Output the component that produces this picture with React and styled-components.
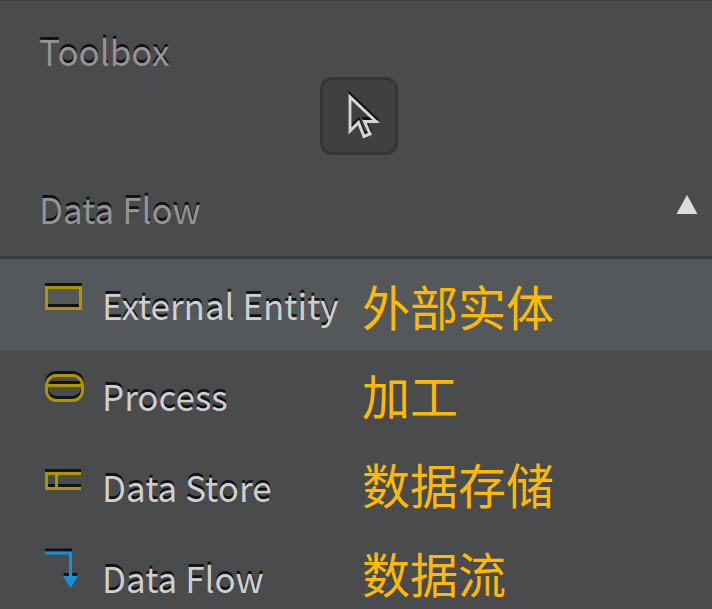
import React from 'react';
import styled, { createGlobalStyle } from 'styled-components';

const items = [
  { name: 'External Entity', icon: 'entity', active: true },
  { name: 'Process', icon: 'process' },
  { name: 'Data Store', icon: 'store' },
  { name: 'Data Flow', icon: 'flow' },
];

const notes = ['外部实体', '加工', '数据存储', '数据流'];

const shapes = {
  entity: <path d="M1.500 3.500h34v21h-34z" />,
  process: (
    <>
      <rect x="1.500" y="0.500" width="36" height="25" rx="10" />
      <path d="M2 10.500h35" />
    </>
  ),
  store: <path d="M36 7.500h-34.500v15h34.500M11.500 7.500v15" />,
  flow: (
    <>
      <path d="M0 -4h25.500v24" />
      <path d="M18 19h15l-7.500 12z" fill="currentColor" stroke="none" />
    </>
  ),
};

const ItemIcon = ({ type }) => (
  <StyledIcon viewBox="0 0 40 40" $blue={type === 'flow'} aria-hidden="true">
    <g color="#111213" stroke="currentColor" transform="translate(0 -3)">{shapes[type]}</g>
    <g stroke="currentColor">{shapes[type]}</g>
  </StyledIcon>
);

const App = () => {
  return (
    <Panel>
      <GlobalStyle />
      <Title>Toolbox</Title>
      <Tools>
        <ToolButton type="button" aria-label="Select" aria-pressed="true">
          <svg width="36" height="50" viewBox="0 0 36 50" fill="none" strokeWidth="3" overflow="visible" aria-hidden="true">
            <path d="M9 3v34l8.500-8.500 5.500 14 6-2.500-5.500-12.500h11.500z" stroke="#111213" />
            <path d="M9 6v34l8.500-8.500 5.500 14 6-2.500-5.500-12.500h11.500z" stroke="#d4d6d6" />
          </svg>
        </ToolButton>
      </Tools>
      <SectionButton type="button" aria-expanded="true">
        <span>Data Flow</span>
        <Arrow viewBox="0 0 22 19" aria-hidden="true">
          <path d="M11 0l10.500 19h-21z" fill="#dcdcdc" />
        </Arrow>
      </SectionButton>
      <Section>
        <List>
          {items.map((item) => (
            <li key={item.icon}>
              <Item type="button" $active={item.active}>
                <ItemIcon type={item.icon} />
                <Label>{item.name}</Label>
              </Item>
            </li>
          ))}
        </List>
        <Notes lang="zh-CN">
          {notes.map((note) => (
            <Note key={note}>{note}</Note>
          ))}
        </Notes>
      </Section>
    </Panel>
  );
}

const GlobalStyle = createGlobalStyle`
  * {
    box-sizing: border-box;
  }

  body {
    margin: 0;
    overflow: hidden;
    background: #4a4b4c;
  }

  button {
    border: none;
    background: none;
    color: inherit;
    font: inherit;
    cursor: pointer;
  }
`;

const Panel = styled.main`
  min-height: 100vh;
  border-top: 1px solid #414243;
  background: #4a4b4c;
  color: #cfcfcf;
  font-family: "Noto Sans CJK SC", "Noto Sans", sans-serif;
  font-size: 35px;
  line-height: 48px;
  text-shadow: 0 -3px 0 #111213;
`;

const Title = styled.h1`
  margin: 0;
  padding: 26px 39px 2px;
  color: #949494;
  font-size: inherit;
  font-weight: 400;
`;

const Tools = styled.div`
  display: flex;
  justify-content: center;
  padding-left: 6px;
`;

const ToolButton = styled.button`
  display: flex;
  align-items: center;
  justify-content: center;
  width: 78px;
  height: 78px;
  padding: 0;
  border: 3px solid #343635;
  border-radius: 12px;
  background: #3f4140;
`;

const SectionButton = styled.button`
  display: flex;
  align-items: center;
  justify-content: space-between;
  width: 100%;
  height: 104px;
  padding: 6px 14px 0 39px;
  border-bottom: 3px solid #3a3b3c;
  color: #949494;
  text-shadow: inherit;
`;

const Arrow = styled.svg`
  width: 22px;
  height: 19px;
  margin-bottom: 8px;
`;

/* Anchor for the notes that lie over the list */
const Section = styled.section`
  position: relative;
`;

const List = styled.ul`
  margin: 0;
  padding: 0;
  list-style: none;
`;

const Item = styled.button`
  display: flex;
  align-items: center;
  gap: 17px;
  width: 100%;
  height: 91px;
  padding: 0 16px 0 45px;
  background: ${(props) => (props.$active ? '#54585a' : 'transparent')};
  text-align: left;
  text-shadow: inherit;
`;

const StyledIcon = styled.svg`
  align-self: flex-start;
  flex: none;
  width: 40px;
  height: 40px;
  margin-top: 25px;
  overflow: visible;
  fill: none;
  stroke-width: 3px;
  color: ${(props) => (props.$blue ? '#1590db' : '#ad9500')};
`;

const Label = styled.span`
  white-space: nowrap;
`;

const Notes = styled.div`
  position: absolute;
  top: 2px;
  left: 362px;
  color: #ffb900;
  font-size: 48px;
  line-height: 89px;
  text-shadow: none;
  pointer-events: none;
`;

const Note = styled.p`
  margin: 0;
  white-space: nowrap;
`;

export default App;
